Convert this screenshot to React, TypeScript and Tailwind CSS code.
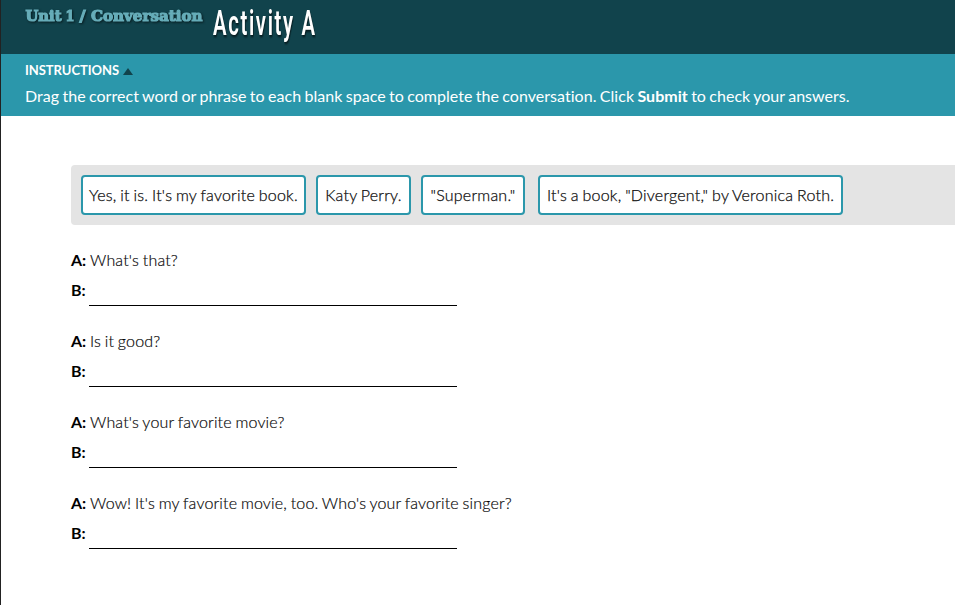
const phrases = [
  { text: "Yes, it is. It's my favorite book.", box: "w-[225px]" },
  { text: "Katy Perry.", box: "ml-[10px] w-[95px]" },
  { text: "\"Superman.\"", box: "ml-[10px] w-[104px]" },
  { text: "It's a book, \"Divergent,\" by Veronica Roth.", box: "ml-[13px] w-[305px]" },
]

const questions = [
  "What's that?",
  "Is it good?",
  "What's your favorite movie?",
  "Wow! It's my favorite movie, too. Who's your favorite singer?",
]

function Header() {
  return (
    <header className="flex h-[54px] bg-[#11434c] pl-6 whitespace-nowrap">
      <svg width="178" height="32" className="shrink-0 overflow-visible">
        <g
          className="fill-[#66adb9] stroke-[#66adb9] text-[15.5px] font-bold [font-family:'DejaVu_Serif',serif] [filter:drop-shadow(1px_1px_1px_#0009)]"
          strokeWidth="1.2"
        >
          <text x="0.5" y="21" textLength="36" lengthAdjust="spacingAndGlyphs">Unit</text>
          <text x="40.5" y="21" textLength="9" lengthAdjust="spacingAndGlyphs">1</text>
          <text x="54.5" y="21" textLength="6" lengthAdjust="spacingAndGlyphs">/</text>
          <text x="66" y="21" textLength="111.5" lengthAdjust="spacingAndGlyphs">Conversation</text>
        </g>
      </svg>
      <svg width="104" height="50" className="ml-[10px] shrink-0 overflow-visible">
        <text
          transform="translate(0 35) scale(0.58 1)"
          textLength="176"
          lengthAdjust="spacing"
          className="fill-white text-[35px] font-semibold [font-family:'Roboto',sans-serif] [filter:drop-shadow(1px_2px_1px_#0009)]"
        >
          Activity A
        </text>
      </svg>
    </header>
  )
}

function Instructions() {
  return (
    <section className="h-[62px] bg-[#2b97ab] pt-2 pl-6 font-normal whitespace-nowrap text-white">
      <div className="flex items-center text-[13px] leading-4 font-bold tracking-[-0.05px]">
        INSTRUCTIONS
        <svg width="10" height="7" viewBox="0 0 10 7" className="mt-[3px] ml-1">
          <path d="M5 0L10 7H0Z" fill="#11434c" />
        </svg>
      </div>
      <p className="mt-2 text-[16px] leading-5 tracking-[0.035px] [font-variant-ligatures:none] [word-spacing:-0.8px]">
        Drag the correct word or phrase to each blank space to complete the conversation. Click{" "}
        <b>Submit</b> to check your answers.
      </p>
    </section>
  )
}

export default function App() {
  return (
    <div className="h-[605px] overflow-hidden border-l border-[#222] bg-white text-[16px] font-light text-black [font-family:Lato,sans-serif]">
      <Header />
      <Instructions />
      <main className="pt-[49px] pl-[70px] [word-spacing:-0.8px]">
        <div className="flex h-[60px] items-center rounded-l bg-[#e4e4e4] pl-[10px]">
          {phrases.map((phrase) => (
            <div
              key={phrase.text}
              className={`flex h-10 shrink-0 items-center justify-center rounded border-2 border-[#2b97ab] bg-white tracking-[0.22px] whitespace-nowrap [-webkit-text-stroke:0.25px_#222] ${phrase.box}`}
            >
              {phrase.text}
            </div>
          ))}
        </div>
        <div className="mt-[25px] flex flex-col gap-[26px]">
          {questions.map((question) => (
            <div key={question} className="h-[55px]">
              <p className="flex leading-5">
                <b className="w-[19px] font-bold">A:</b>
                <span className="tracking-[0.17px] [-webkit-text-stroke:0.2px_#222]">{question}</span>
              </p>
              <div className="mt-[10px] flex h-[26px]">
                <b className="w-[18px] leading-5 font-bold">B:</b>
                <span className="w-[368px] border-b border-black" />
              </div>
            </div>
          ))}
        </div>
      </main>
    </div>
  )
}
